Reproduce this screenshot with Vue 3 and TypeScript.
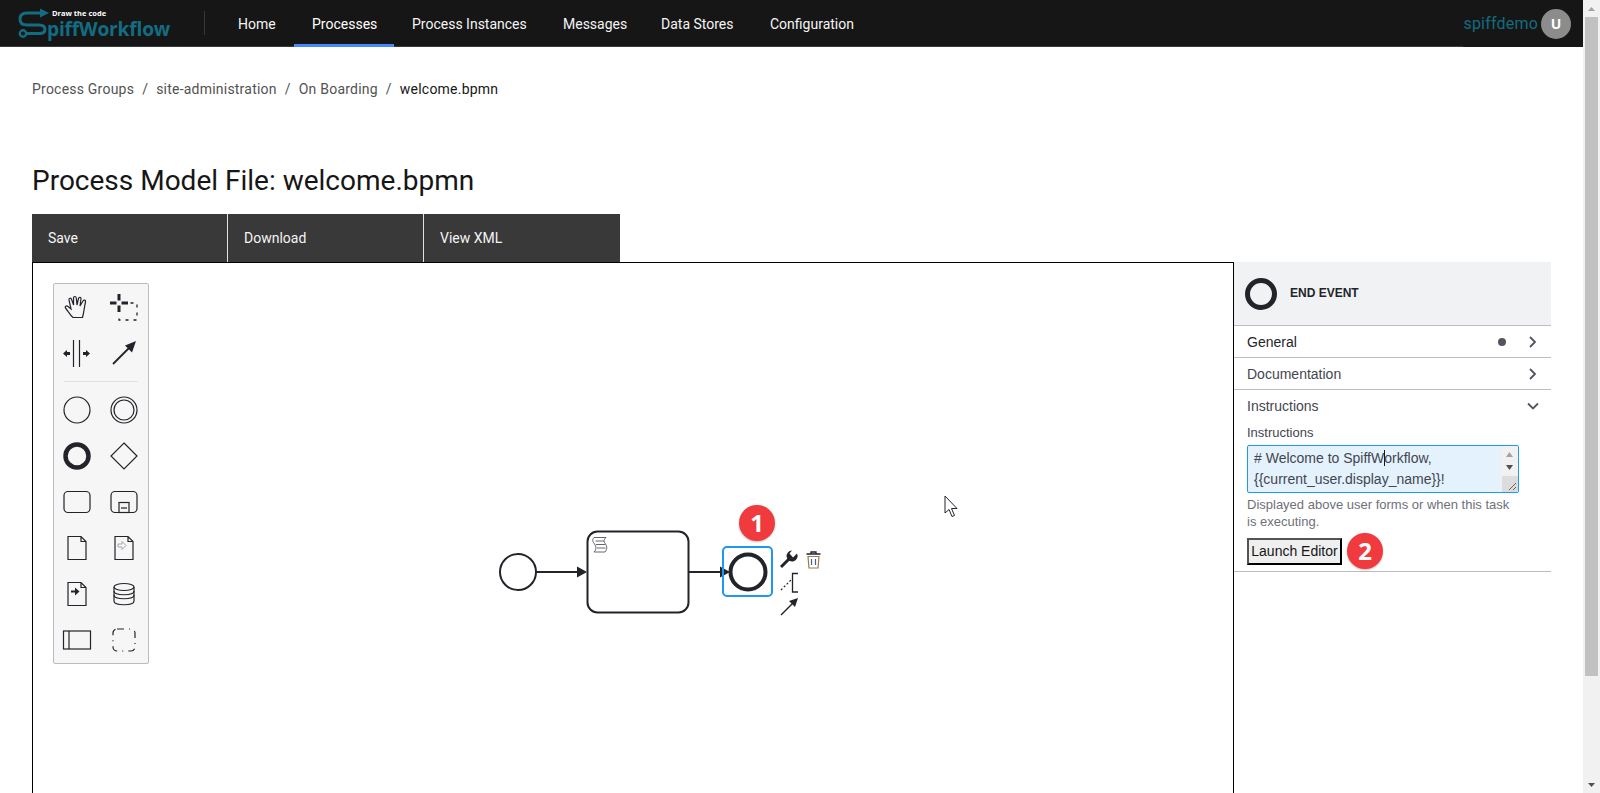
<script setup lang="ts">
const navItems: { label: string; width: number; active?: boolean }[] = [
  { label: 'Home', width: 74 },
  { label: 'Processes', width: 100, active: true },
  { label: 'Process Instances', width: 151 },
  { label: 'Messages', width: 98 },
  { label: 'Data Stores', width: 109 },
  { label: 'Configuration', width: 120 },
]
const crumbs: string[] = ['Process Groups', 'site-administration', 'On Boarding']
const actions: string[] = ['Save', 'Download', 'View XML']
</script>

<template>
  <div class="page">
    <div class="main">
      <header class="topbar">
        <div class="logo">
          <svg class="logo-mark" width="52" height="40" viewBox="0 0 52 40" fill="none">
            <path d="M41 13H27Q20 13 20 19Q20 25 27 25H39Q45 25 45 29.5Q45 33.5 39 33.5H27" stroke="#126d82" stroke-width="3" />
            <circle cx="23" cy="33.5" r="3.2" stroke="#126d82" stroke-width="2.4" />
            <path d="M40 8.5L49 13L40 17.5Z" fill="#126d82" />
          </svg>
          <span class="logo-tag">Draw the code</span>
          <span class="logo-word">piffWorkflow</span>
        </div>
        <div class="divider"></div>
        <nav class="nav">
          <a v-for="item in navItems" :key="item.label" class="nav-item" :class="{ active: item.active }" :style="{ width: item.width + 'px' }">{{ item.label }}</a>
        </nav>
        <div class="user">
          <span class="user-name">spiffdemo</span>
          <span class="avatar">U</span>
        </div>
      </header>

      <main class="content">
        <div class="crumbs">
          <template v-for="c in crumbs" :key="c">
            <a class="crumb">{{ c }}</a><span class="sep">/</span>
          </template>
          <span class="crumb current">welcome.bpmn</span>
        </div>
        <h1 class="title">Process Model File: welcome.bpmn</h1>
        <div class="actions">
          <button v-for="a in actions" :key="a" class="action">{{ a }}</button>
        </div>

        <div class="editor">
          <div class="canvas">
            <div class="palette">
              <div class="pal-grid">
                <svg viewBox="0 0 46 46"><path d="M19 33.5C16 31 14 27 11.5 24C10.5 22.5 12.5 21.3 14 22.5L17 25L15 16C14.7 14 17 13.5 17.6 15.5L19.6 21L19.5 14C19.5 12 22 12 22.3 14L23 21L24.5 14.5C25 12.6 27.3 13 27 15L26 22L29 17C30 15.5 32 16 31.5 18C30.5 22 30 28 28.5 33.5Z" class="s1" /></svg>
                <svg viewBox="0 0 46 46"><path d="M9 19H15.500M20.500 19H27M18 10V16.500M18 21.500V28" class="s3" /><path d="M29.500 19H36V36H18V30" class="sd" /></svg>
                <svg viewBox="0 0 46 46"><path d="M19.500 10V37M25.500 10V37" class="s1" /><path d="M9 23.500L13 20V22H16V25H13V27Z" class="f" /><path d="M36 23.500L32 20V22H29V25H32V27Z" class="f" /></svg>
                <svg viewBox="0 0 46 46"><path d="M12 34L30 16" class="s15" /><path d="M35 11L31 22.500L24 15.500Z" class="f" /></svg>
              </div>
              <div class="pal-sep"></div>
              <div class="pal-grid">
                <svg viewBox="0 0 46 46"><circle cx="23" cy="23" r="13" class="s1" /></svg>
                <svg viewBox="0 0 46 46"><circle cx="23" cy="23" r="13" class="s1" /><circle cx="23" cy="23" r="10" class="s1" /></svg>
                <svg viewBox="0 0 46 46"><circle cx="23" cy="23" r="11.500" class="s45" /></svg>
                <svg viewBox="0 0 46 46"><path d="M23 10L36 23L23 36L10 23Z" class="s1" /></svg>
                <svg viewBox="0 0 46 46"><rect x="10" y="12.500" width="26" height="21" rx="4" class="s1" /></svg>
                <svg viewBox="0 0 46 46"><rect x="10" y="12.500" width="26" height="21" rx="4" class="s1" /><rect x="18" y="23.500" width="10" height="10" class="s1" /><path d="M20 29H26" class="s1" /></svg>
                <svg viewBox="0 0 46 46"><path d="M14 11.500H27L32 16.500V34.500H14Z M27 11.500V16.500H32" class="s1" /></svg>
                <svg viewBox="0 0 46 46"><path d="M14 11.500H27L32 16.500V34.500H14Z M27 11.500V16.500H32" class="s1" /><path d="M17 19H21V16.500L25 20.500L21 24.500V22H17Z" class="lt" /></svg>
                <svg viewBox="0 0 46 46"><path d="M14 11.500H27L32 16.500V34.500H14Z M27 11.500V16.500H32" class="s1" /><path d="M17 19.500H21V16.500L25.500 20.500L21 24.500V21.500H17Z" class="f" /></svg>
                <svg viewBox="0 0 46 46"><path d="M13 16V30C13 35 33 35 33 30V16" class="s1" /><ellipse cx="23" cy="16" rx="10" ry="3.500" class="s1" /><path d="M13 20C13 25 33 25 33 20M13 24C13 29 33 29 33 24" class="s1" /></svg>
                <svg viewBox="0 0 46 46"><rect x="9.500" y="14" width="27" height="18" class="s1" /><path d="M15 14V32" class="s1" /></svg>
                <svg viewBox="0 0 46 46"><rect x="12" y="12" width="22" height="22" rx="4" class="sg" /></svg>
              </div>
            </div>

            <svg class="diagram" viewBox="33 263 1200 530" fill="none">
              <circle cx="518" cy="572" r="18" class="d-line" />
              <path d="M536 572H580" class="d-line" /><path d="M587 572L577 566.500V577.500Z" fill="#22242a" />
              <rect x="587.500" y="531.500" width="101" height="81" rx="10" class="d-line" />
              <path d="M594 537.500H606C603.500 540 603.500 541.500 605.500 544C607.500 547 607 549.500 605 552H594C596.500 549.500 596.500 547 594.500 544C592.500 541.500 592 540 594 537.500ZM595.500 541H604M596 544.500H605M597 548H605.500" stroke="#55575e" stroke-width="0.900" />
              <path d="M688 572H722" class="d-line" /><path d="M730 572L720 566.500V577.500Z" fill="#22242a" />
              <rect x="723" y="547" width="49" height="49" rx="4" stroke="#2196f3" stroke-width="2" />
              <circle cx="748" cy="572" r="17.500" stroke="#22242a" stroke-width="4" />

              <path d="M781 567L791 557" stroke="#22242a" stroke-width="3" />
              <path d="M797 553.500A5.500 5.500 0 1 1 792 550.500L789.500 553.500L793 557.500Z" fill="#22242a" />
              <path d="M806.500 554H820.500M811 553.500V552H816V553.500" stroke="#22242a" stroke-width="1.300" />
              <path d="M808 556.500H819L818 568H809Z" stroke="#9a7b4f" stroke-width="1.200" />
              <path d="M811.500 559V565M815.500 559V565" stroke="#3d5fa8" stroke-width="1.200" />
              <path d="M781 590L791 580" stroke="#22242a" stroke-width="1.200" stroke-dasharray="2 2" />
              <path d="M798 573.500H792.500V592H798" stroke="#22242a" stroke-width="1.300" />
              <path d="M781 615L793 603" stroke="#22242a" stroke-width="1.500" />
              <path d="M798 598L795 607L789 601Z" fill="#22242a" />

              <path d="M945 496V513L949 509.500L952 516.500L954.500 515.500L951.500 508.500H957Z" fill="#fff" stroke="#22242a" stroke-width="1" />
            </svg>
            <span class="badge badge-one">1</span>
          </div>

          <aside class="panel">
            <div class="panel-head">
              <svg width="32" height="32" viewBox="0 0 32 32" fill="none"><circle cx="16" cy="16" r="13.500" stroke="#22242a" stroke-width="5" /></svg>
              <span class="panel-title">END EVENT</span>
            </div>
            <div class="group">
              <span class="group-name dark">General</span>
              <span class="dot"></span>
              <svg class="chev" width="10" height="12" viewBox="0 0 10 12" fill="none"><path d="M2 1L7 6L2 11" /></svg>
            </div>
            <div class="group">
              <span class="group-name">Documentation</span>
              <svg class="chev" width="10" height="12" viewBox="0 0 10 12" fill="none"><path d="M2 1L7 6L2 11" /></svg>
            </div>
            <div class="group open">
              <span class="group-name">Instructions</span>
              <svg class="chev down" width="12" height="10" viewBox="0 0 12 10" fill="none"><path d="M1 2.500L6 7.500L11 2.500" /></svg>
            </div>
            <div class="fields">
              <label class="field-label">Instructions</label>
              <div class="textarea">
                <div class="ta-text">
                  <div># Welcome to SpiffW<span class="caret"></span>orkflow,</div>
                  <div>&#123;&#123;current_user.display_name&#125;&#125;!</div>
                </div>
                <div class="ta-scroll">
                  <svg width="16" height="32" viewBox="0 0 16 32"><path d="M5 11L8.500 6L12 11Z" fill="#a3a3a3" /><path d="M5 19L8.500 24L12 19Z" fill="#505050" /></svg>
                  <svg class="grip" width="16" height="16" viewBox="0 0 16 16" fill="none"><path d="M14 7L7 14M14 11L11 14" stroke="#666" stroke-width="1" /></svg>
                </div>
              </div>
              <p class="help">Displayed above user forms or when this task is executing.</p>
              <div class="launch-row">
                <button class="launch">Launch Editor</button>
                <span class="badge">2</span>
              </div>
            </div>
          </aside>
        </div>
      </main>
    </div>

    <div class="scrollbar">
      <div class="sb-btn"><svg width="7" height="4" viewBox="0 0 7 4"><path d="M3.500 0L7 4H0Z" fill="#a3a3a3" /></svg></div>
      <div class="sb-track"><div class="sb-thumb"></div></div>
      <div class="sb-btn"><svg width="7" height="4" viewBox="0 0 7 4"><path d="M0 0H7L3.500 4Z" fill="#505050" /></svg></div>
    </div>
  </div>
</template>

<style>
html, body { margin: 0; height: 100%; overflow: hidden; background: #fff; }
</style>

<style scoped>
.page { display: flex; width: 1600px; height: 793px; overflow: hidden; font-family: Roboto, "Liberation Sans", sans-serif; }
.main { flex: 1; min-width: 0; display: flex; flex-direction: column; }

.topbar { height: 46px; background: #161616; border-bottom: 1px solid #393939; display: flex; align-items: stretch; color: #fff; }
.logo { position: relative; width: 204px; flex: none; }
.logo-mark { position: absolute; left: 0; top: 0; }
.logo-tag { position: absolute; left: 52px; top: 8px; font: 700 7.500px/10px "Open Sans", sans-serif; color: #fff; white-space: nowrap; }
.logo-word { position: absolute; left: 47px; top: 18px; font: 700 19.200px/22px "Open Sans", sans-serif; color: #126d82; letter-spacing: -0.200px; white-space: nowrap; }
.divider { width: 1px; background: #393939; height: 24px; align-self: center; flex: none; }
.nav { display: flex; margin-left: 15px; }
.nav-item { padding: 1px 0 0 18px; font-size: 14px; line-height: 47px; height: 47px; box-sizing: border-box; color: #f4f4f4; white-space: nowrap; }
.nav-item.active { border-bottom: 3px solid #4589ff; color: #fff; }
.user { margin-left: auto; display: flex; align-items: center; padding-right: 12px; height: 47px; background: #161616; }
.user-name { color: #126d82; font-size: 16px; letter-spacing: 0.200px; }
.avatar { width: 30px; height: 30px; border-radius: 50%; background: #8c8c8c; color: #fff; font: 700 14px/30px "Open Sans", sans-serif; text-align: center; margin-left: 3px; }

.content { flex: 1; min-height: 0; padding: 0 32px; display: flex; flex-direction: column; }
.crumbs { margin-top: 33px; height: 18px; font-size: 14px; line-height: 18px; color: #525252; letter-spacing: 0.220px; display: flex; }
.sep { margin: 0 8px; }
.current { color: #161616; }
.title { margin: 65px 0 0; font-size: 28px; font-weight: 400; line-height: 36px; color: #161616; }
.actions { margin-top: 15px; display: flex; height: 48px; flex: none; }
.action { width: 196px; height: 48px; background: #393939; color: #f4f4f4; border: none; border-right: 1px solid #e0e0e0; text-align: left; padding: 0 16px; font: 400 14px Roboto, sans-serif; }
.action:last-child { border-right: none; }

.editor { flex: 1; min-height: 0; display: flex; }
.canvas { position: relative; width: 1202px; flex: none; box-sizing: border-box; border: 1px solid #000; border-bottom: none; }
.palette { position: absolute; left: 20px; top: 20px; width: 94px; background: #f6f6f6; border: 1px solid #b9bcc6; border-radius: 2px; }
.pal-grid { display: grid; grid-template-columns: 47px 47px; grid-auto-rows: 46px; }
.pal-grid svg { width: 46px; height: 46px; fill: none; }
.pal-sep { height: 1px; margin: 5px 10px; background: #e2e2e2; }
.s1 { stroke: #22242a; stroke-width: 1.200; fill: none; }
.s15 { stroke: #22242a; stroke-width: 1.800; fill: none; }
.s3 { stroke: #22242a; stroke-width: 3; fill: none; }
.s45 { stroke: #22242a; stroke-width: 4.500; fill: none; }
.sd { stroke: #22242a; stroke-width: 1.300; stroke-dasharray: 3 5; fill: none; }
.sg { stroke: #22242a; stroke-width: 1.200; stroke-dasharray: 7 5 1 5; fill: none; }
.f { fill: #22242a; }
.lt { fill: none; stroke: #a6a6ad; stroke-width: 1; }
.diagram { position: absolute; left: 0; top: 0; width: 1200px; height: 530px; }
.d-line { stroke: #22242a; stroke-width: 2; fill: none; }

.badge { width: 36px; height: 36px; border-radius: 50%; background: #f03a3e; color: #fff; font: 700 24px/36px "Open Sans", sans-serif; text-align: center; display: block; flex: none; box-shadow: 0 1px 2px rgba(0,0,0,.25); }
.badge-one { position: absolute; left: 706px; top: 242px; }

.panel { width: 317px; flex: none; font-family: "Liberation Sans", Arial, sans-serif; color: #22242a; }
.panel-head { height: 63px; background: #f1f2f4; display: flex; align-items: center; padding-left: 11px; border-bottom: 1px solid #bbbcc4; }
.panel-title { margin: -2px 0 0 13px; font-size: 12px; font-weight: 700; }
.group { height: 31px; display: flex; align-items: center; padding: 0 13px; border-bottom: 1px solid #bbbcc4; font-size: 14px; color: #44464f; position: relative; }
.group-name.dark { color: #22242a; }
.group.open { border-bottom: none; }
.dot { position: absolute; left: 264px; top: 12px; width: 8px; height: 8px; border-radius: 50%; background: #52555f; }
.chev { margin-left: auto; stroke: #52555f; stroke-width: 1.800; }
.chev.down { margin-right: -1px; }
.fields { padding: 2px 13px 2px; border-bottom: 1px solid #bbbcc4; }
.field-label { display: block; font-size: 13px; line-height: 20px; color: #44464f; }
.textarea { margin-top: 2px; width: 272px; height: 48px; box-sizing: border-box; border: 1px solid #2196f3; border-radius: 2px; background: #e3f2fd; display: flex; justify-content: space-between; overflow: hidden; font-size: 14px; line-height: 21px; color: #44464f; }
.ta-text { padding: 2px 6px; white-space: nowrap; }
.caret { display: inline-block; width: 1px; height: 16px; margin-right: -1px; background: #161616; vertical-align: -3px; }
.ta-scroll { width: 17px; position: relative; background: #f1f1f1; }
.ta-scroll svg { display: block; }
.grip { position: absolute; right: 0; bottom: 0; background: #dcdcdc; }
.help { margin: 3px 0 0; width: 270px; font-size: 13px; line-height: 17px; color: #6f7079; }
.launch-row { display: flex; align-items: center; margin-top: 3px; height: 36px; }
.launch { width: 95px; height: 27px; box-sizing: border-box; padding: 0; border: 2px outset #000; background: #efefef; color: #161616; font: 400 14px "Liberation Sans", Arial, sans-serif; }
.launch-row .badge { margin-left: 5px; }

.scrollbar { width: 17px; flex: none; background: #f1f1f1; display: flex; flex-direction: column; }
.sb-btn { height: 17px; display: flex; align-items: center; justify-content: center; flex: none; }
.sb-track { flex: 1; padding: 0 2px 0; }
.sb-thumb { height: 659px; background: #c1c1c1; }
</style>
